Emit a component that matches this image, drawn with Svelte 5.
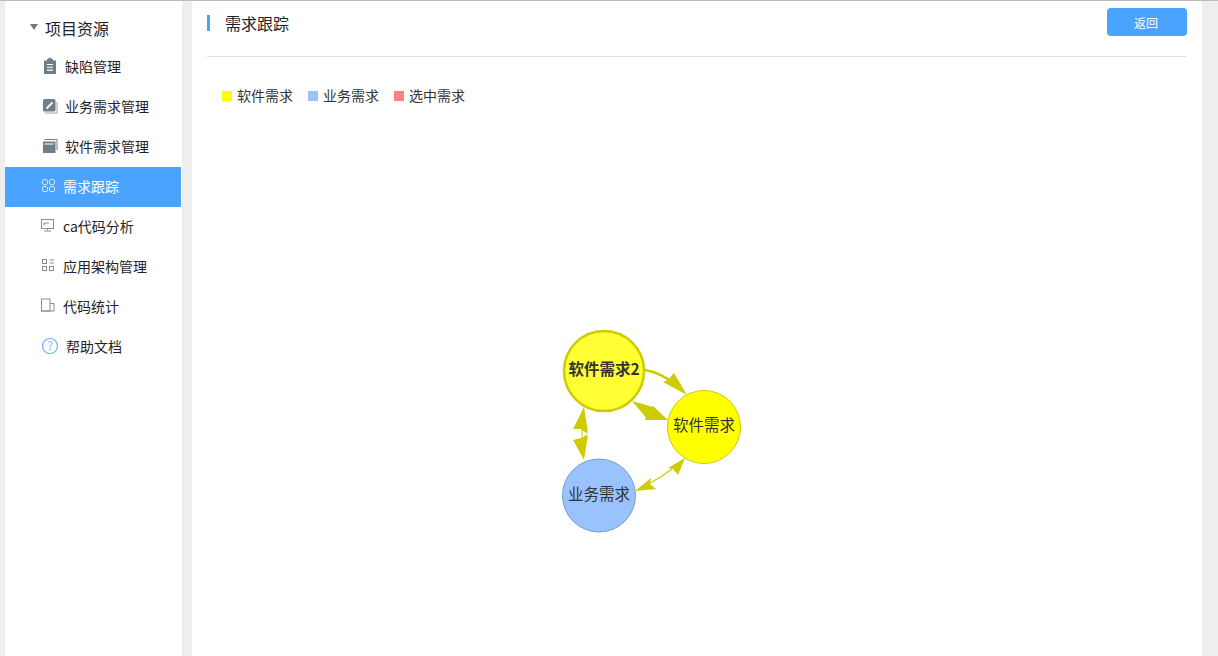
<script lang="ts">
	const items = [
		{ key: 'bug', label: '缺陷管理', cls: 'wide' },
		{ key: 'biz', label: '业务需求管理', cls: 'wide' },
		{ key: 'soft', label: '软件需求管理', cls: 'wide' },
		{ key: 'trace', label: '需求跟踪', cls: 'active' },
		{ key: 'ca', label: 'ca代码分析', cls: '' },
		{ key: 'arch', label: '应用架构管理', cls: '' },
		{ key: 'stat', label: '代码统计', cls: '' },
		{ key: 'help', label: '帮助文档', cls: 'help' }
	];

	const legend = [
		{ label: '软件需求', color: '#ffff00' },
		{ label: '业务需求', color: '#99c2ff' },
		{ label: '选中需求', color: '#ff8080' }
	];
</script>

{#snippet icon(key: string)}
	<svg class="icon" width="18" height="18" viewBox="0 0 18 18">
		{#if key === 'bug'}
			<path fill="#6f7f8a" d="M3 3.5h3V2h1.5V.8h3V2H12v1.5h3V17H3z" />
			<path stroke="#fff" stroke-width="1.1" d="M6 7.5h6M6 10.3h6M6 13.1h6" />
		{:else if key === 'biz'}
			<rect x="2" y="2" width="12.5" height="12.5" rx="1.5" fill="#6f7f8a" />
			<path fill="none" stroke="#9aa5ad" d="M3.5 16h12.5V5" />
			<path stroke="#fff" stroke-width="1.8" d="M5.5 11.5l6-6" />
		{:else if key === 'soft'}
			<path fill="#6f7f8a" d="M2 4.5h12.5V16H2z" />
			<path fill="none" stroke="#6f7f8a" d="M3.5 2.5h12.5V13" />
			<path stroke="#fff" d="M3.5 7h9" />
		{:else if key === 'trace'}
			<g fill="none" stroke="#cfe4ff">
				<rect x="2.5" y="2.5" width="5" height="5" rx="1.5" />
				<rect x="9.5" y="2.5" width="5" height="5" rx="1.5" />
				<rect x="2.5" y="9.5" width="5" height="5" rx="1.5" />
				<rect x="9.5" y="9.5" width="5" height="5" rx="1.5" />
			</g>
		{:else if key === 'ca'}
			<g fill="none" stroke="#8c8c8c">
				<rect x="1.5" y="2.5" width="12" height="9" />
				<path d="M4 6h5M4 6v2.5M7.5 11.5v2M4 14h7" />
			</g>
		{:else if key === 'arch'}
			<g fill="none" stroke="#8c8c8c">
				<rect x="2.5" y="2.5" width="4" height="4" />
				<rect x="2.5" y="9.5" width="4" height="4" />
				<rect x="9.5" y="9.5" width="4" height="4" />
				<path d="M9.5 3h4.5M9.5 6h4.5" />
			</g>
		{:else if key === 'stat'}
			<g fill="none" stroke="#8c8c8c">
				<rect x="1.5" y="2" width="8.5" height="12" />
				<path d="M10 6.5h4v7.5H1.5" />
			</g>
		{:else if key === 'help'}
			<circle cx="9" cy="9" r="7.5" fill="none" stroke="#66b1ff" stroke-width="1.2" />
			<text x="9" y="12.6" class="qmark">?</text>
		{/if}
	</svg>
{/snippet}

<div class="page">
	<aside class="sidebar">
		<div class="group">
			<span class="caret"></span>
			<span>项目资源</span>
		</div>
		<nav>
			{#each items as item}
				<div class="nav-item {item.cls}">
					{@render icon(item.key)}
					<span>{item.label}</span>
				</div>
			{/each}
		</nav>
	</aside>

	<main class="main">
		<header class="head">
			<h1>需求跟踪</h1>
			<button type="button">返回</button>
		</header>

		<div class="legend">
			{#each legend as entry}
				<span class="entry">
					<i style="background: {entry.color}"></i>{entry.label}
				</span>
			{/each}
		</div>

		<div class="graph">
			<svg width="1010" height="536" viewBox="192 120 1010 536">
				<g fill="none" stroke="#cccc00">
					<path stroke-width="2.5" d="M645 370Q662 373 676 385" />
					<path stroke-width="3" d="M638 404L662 417" />
					<path stroke-width="1.2" d="M650 483Q662 477 672 469" />
				</g>
				<g fill="#cccc00">
					<path d="M687 395L663 382L668 380L674 373Z" />
					<path d="M632 401L653 407L648 412L648 420Z" />
					<path d="M668 420L645 420L647 411L653 406Z" />
					<path d="M584 407L587.5 429L581 429L573 429Z" />
					<path d="M584 460L573 440L581 438L587.5 438Z" />
					<path d="M581.5 428h6v11h-6z" />
					<path d="M635 491L651 478L650 484L656 489Z" />
					<path d="M685 458L668 468L673 469L678 475Z" />
				</g>
				<path fill="#fff" d="M582.5 430.5L588 434L582.5 437.5Z" />

				<circle cx="604" cy="371" r="40" fill="#ffff33" stroke="#cccc00" stroke-width="2.5" />
				<circle cx="704" cy="427" r="36.5" fill="#ffff00" stroke="#cccc00" />
				<circle cx="599" cy="495.5" r="36.5" fill="#99c2ff" stroke="#7a9bcc" />

				<text x="604" y="375" class="label bold">软件需求2</text>
				<text x="704" y="431" class="label">软件需求</text>
				<text x="599" y="500" class="label">业务需求</text>
			</svg>
		</div>
	</main>
</div>

<style>
	:global(body) {
		background: #eeeeee;
		font-family: "Noto Sans CJK SC", "Noto Sans", sans-serif;
		overflow: hidden;
	}

	.page {
		display: flex;
		height: 655px;
		border-top: 1px solid #bbbbbb;
	}

	.sidebar {
		width: 177px;
		margin-left: 5px;
		background: #fff;
	}

	.group {
		display: flex;
		align-items: center;
		height: 46px;
		padding: 8px 0 0 25px;
		box-sizing: border-box;
		gap: 7px;
		font-size: 16px;
		color: #1f2329;
	}

	.caret {
		width: 0;
		height: 0;
		border-left: 4.5px solid transparent;
		border-right: 4.5px solid transparent;
		border-top: 6px solid #777;
		margin-top: -3px;
	}

	.nav-item {
		display: flex;
		align-items: center;
		height: 40px;
		width: 176px;
		padding: 0 0 2px 35px;
		box-sizing: border-box;
		gap: 5px;
		font-size: 14px;
		color: #1f2329;
	}

	.nav-item.wide {
		padding-left: 36px;
		gap: 6px;
	}

	.nav-item.help {
		padding-left: 36px;
		gap: 7px;
	}

	.nav-item.active {
		background: #4aa3ff;
		color: #fff;
	}

	.icon {
		flex: none;
	}

	.qmark {
		font-size: 11px;
		fill: #66b1ff;
		text-anchor: middle;
	}

	.main {
		width: 1010px;
		margin-left: 10px;
		background: #fff;
	}

	.head {
		display: flex;
		align-items: flex-start;
		justify-content: space-between;
		margin: 0 16px 0 15px;
		height: 56px;
		padding-top: 7px;
		box-sizing: border-box;
		border-bottom: 1px solid #e0e0e0;
	}

	h1 {
		margin: 7px 0 0;
		padding-left: 15px;
		border-left: 3px solid #4aa3ff;
		height: 16px;
		line-height: 16px;
		font-size: 16px;
		font-weight: 400;
		color: #1f2329;
	}

	button {
		width: 80px;
		height: 28px;
		margin-right: -1px;
		padding: 0 2px 0 0;
		border: 0;
		border-radius: 4px;
		background: #4aa3ff;
		color: #fff;
		font: inherit;
		font-size: 12px;
	}

	.legend {
		display: flex;
		gap: 15px;
		height: 63px;
		padding: 29px 0 0 30px;
		box-sizing: border-box;
		font-size: 14px;
		line-height: 18px;
		color: #333;
	}

	.entry {
		display: flex;
		align-items: center;
		height: 18px;
	}

	.entry i {
		width: 10px;
		height: 10px;
		margin: 2px 5px 0 0;
	}

	.graph svg {
		display: block;
	}

	.label {
		font-size: 15.5px;
		fill: #333;
		text-anchor: middle;
	}

	.bold {
		font-weight: 700;
	}
</style>
